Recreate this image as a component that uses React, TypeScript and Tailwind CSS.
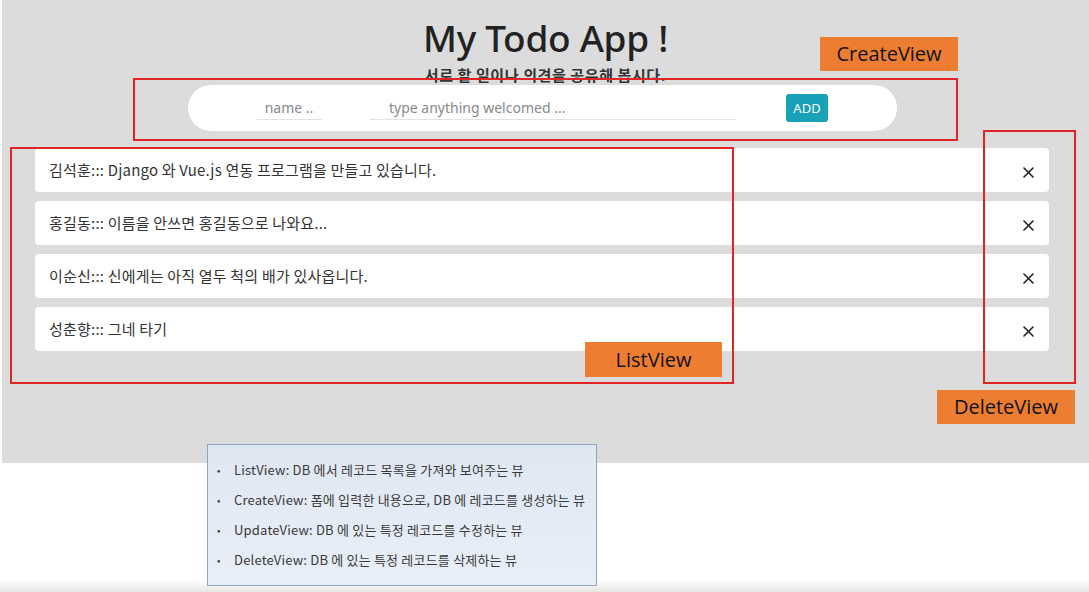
import React from "react";

const todos = [
  { name: "김석훈", text: "Django 와 Vue.js 연동 프로그램을 만들고 있습니다." },
  { name: "홍길동", text: "이름을 안쓰면 홍길동으로 나와요..." },
  { name: "이순신", text: "신에게는 아직 열두 척의 배가 있사옵니다." },
  { name: "성춘향", text: "그네 타기" },
];

const notes = [
  "ListView: DB 에서 레코드 목록을 가져와 보여주는 뷰",
  "CreateView: 폼에 입력한 내용으로, DB 에 레코드를 생성하는 뷰",
  "UpdateView: DB 에 있는 특정 레코드를 수정하는 뷰",
  "DeleteView: DB 에 있는 특정 레코드를 삭제하는 뷰",
];

const CloseIcon = () => (
  <svg width="11" height="11" viewBox="0 0 11 11" fill="none" className="mt-[4px]">
    <path d="M1 1L10 10M10 1L1 10" stroke="#222" strokeWidth="1.6" strokeLinecap="round" />
  </svg>
);

const Label = ({ text, className }: { text: string; className: string }) => (
  <div
    className={
      "absolute bg-[#ed7d31] text-[#111] text-[20px] leading-none flex items-center justify-center font-['Open_Sans',sans-serif] " +
      className
    }
  >
    {text}
  </div>
);

export default function App() {
  return (
    <div className="relative w-[1089px] h-[592px] overflow-hidden bg-white font-['Noto_Sans','Noto_Sans_CJK_KR',sans-serif]">
      {/* app area */}
      <div className="ml-[2px] h-[463px] bg-[#dcdcdc] flex flex-col">
        <h1 className="mt-[14px] text-center text-[37px] leading-[48px] font-medium text-[#222] tracking-[-0.3px]">
          My Todo App !
        </h1>
        <p className="mt-[3px] text-center text-[15px] leading-[20px] font-semibold text-[#333] tracking-[0.6px] font-['Noto_Sans_CJK_KR',sans-serif]">
          서로 할 일이나 의견을 공유해 봅시다.
        </p>

        <div className="ml-[186px] w-[709px] h-[46px] rounded-full bg-white flex items-center">
          <div className="ml-[68px] w-[66px] border-b border-[#e2e2e2] text-center text-[14px] leading-[22px] text-[#8a8a8a]">
            name ..
          </div>
          <div className="ml-[48px] w-[366px] border-b border-[#e2e2e2] pl-[19px] text-[14px] leading-[22px] text-[#8a8a8a]">
            type anything welcomed ...
          </div>
          <button className="ml-[50px] w-[42px] h-[28px] rounded-[3px] bg-[#17a2b8] text-white text-[13px] leading-none">
            ADD
          </button>
        </div>

        <ul className="mt-[17px] ml-[33px] mr-[40px] flex flex-col gap-[9px]">
          {todos.map((t) => (
            <li
              key={t.name}
              className="h-[44px] rounded-[4px] bg-white flex items-center justify-between pl-[14px] pr-[15px] font-['Noto_Sans_CJK_KR',sans-serif] text-[15px] tracking-[0.2px] text-[#333]"
            >
              <span className="mt-[1px]">
                {t.name}::: {t.text}
              </span>
              <CloseIcon />
            </li>
          ))}
        </ul>
      </div>

      <div className="absolute left-0 right-0 bottom-0 h-[12px] bg-gradient-to-b from-white to-[#e6e6e6]" />

      {/* notes card */}
      <div className="relative z-10 ml-[207px] -mt-[19px] w-[390px] h-[142px] border border-[#8fa6c2] bg-gradient-to-b from-[#dfe7f2] to-[#e9eff9] pt-[15px] pl-[9px] font-['Noto_Sans_CJK_KR',sans-serif] text-[13px] text-[#3a3a3a]">
        <ul className="flex flex-col gap-[10px]">
          {notes.map((n) => (
            <li key={n} className="flex items-center leading-[20px]">
              <span className="w-[17px] text-[10px]">•</span>
              <span className="tracking-[0.2px]">{n}</span>
            </li>
          ))}
        </ul>
      </div>

      {/* annotation overlays */}
      <div className="absolute z-20 left-[133px] top-[78px] w-[825px] h-[63px] border-2 border-[#e12525]" />
      <div className="absolute z-20 left-[10px] top-[147px] w-[724px] h-[237px] border-2 border-[#e12525]" />
      <div className="absolute z-20 left-[983px] top-[130px] w-[93px] h-[254px] border-2 border-[#e12525]" />

      <Label text="CreateView" className="z-20 left-[820px] top-[37px] w-[138px] h-[34px]" />
      <Label text="ListView" className="z-20 left-[585px] top-[342px] w-[137px] h-[35px]" />
      <Label text="DeleteView" className="z-20 left-[937px] top-[390px] w-[138px] h-[34px]" />
    </div>
  );
}
